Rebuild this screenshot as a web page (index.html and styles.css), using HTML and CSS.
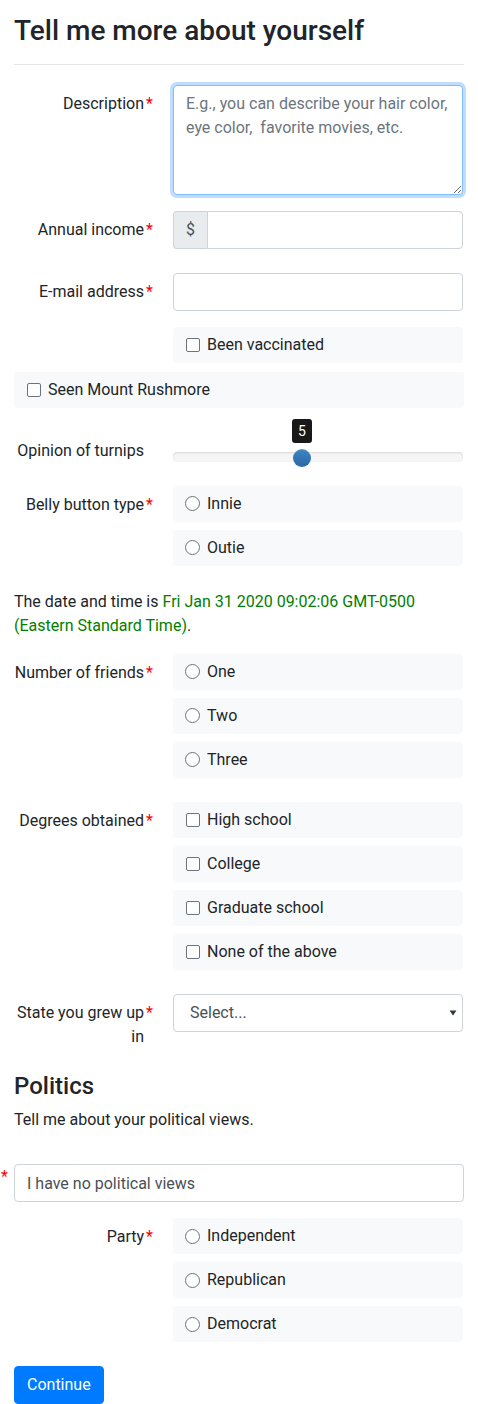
FILE: index.html
```html
<!DOCTYPE html>
<html lang="en">
<head>
<meta charset="utf-8">
<title>Tell me more about yourself</title>
<link rel="stylesheet" href="styles.css">
</head>
<body>
<main class="page">
  <h3 class="title">Tell me more about yourself</h3>
  <hr class="rule">

  <div class="group">
    <label class="lbl"><span class="lbl-text">Description</span><span class="req">*</span></label>
    <div class="ctrl">
      <textarea class="field area" placeholder="E.g., you can describe your hair color, eye color,  favorite movies, etc."></textarea>
    </div>
  </div>

  <div class="group group-wide">
    <label class="lbl"><span class="lbl-text">Annual income</span><span class="req">*</span></label>
    <div class="ctrl">
      <div class="igroup">
        <span class="addon">$</span>
        <input class="field ifield" type="text">
      </div>
    </div>
  </div>

  <div class="group">
    <label class="lbl"><span class="lbl-text">E-mail address</span><span class="req">*</span></label>
    <div class="ctrl">
      <input class="field" type="email">
    </div>
  </div>

  <div class="group group-tight">
    <div class="lbl-empty"></div>
    <div class="ctrl">
      <label class="opt"><input class="chk" type="checkbox"><span>Been vaccinated</span></label>
    </div>
  </div>

  <div class="block">
    <label class="opt"><input class="chk" type="checkbox"><span>Seen Mount Rushmore</span></label>
  </div>

  <div class="group">
    <label class="lbl"><span class="lbl-text">Opinion of turnips</span><span class="req"></span></label>
    <div class="ctrl">
      <div class="slider">
        <div class="track"></div>
        <div class="handle-wrap" style="left: 44.44%;">
          <div class="tip">5</div>
          <div class="thumb"></div>
        </div>
      </div>
    </div>
  </div>

  <div class="group">
    <label class="lbl"><span class="lbl-text">Belly button type</span><span class="req">*</span></label>
    <div class="ctrl">
      <label class="opt"><input class="rad" type="radio" name="belly"><span>Innie</span></label>
      <label class="opt"><input class="rad" type="radio" name="belly"><span>Outie</span></label>
    </div>
  </div>

  <p class="date">The date and time is <span class="green">Fri Jan 31 2020 09:02:06 GMT-0500 (Eastern Standard Time)</span>.</p>

  <div class="group">
    <label class="lbl"><span class="lbl-text">Number of friends</span><span class="req">*</span></label>
    <div class="ctrl">
      <label class="opt"><input class="rad" type="radio" name="friends"><span>One</span></label>
      <label class="opt"><input class="rad" type="radio" name="friends"><span>Two</span></label>
      <label class="opt"><input class="rad" type="radio" name="friends"><span>Three</span></label>
    </div>
  </div>

  <div class="group">
    <label class="lbl"><span class="lbl-text">Degrees obtained</span><span class="req">*</span></label>
    <div class="ctrl">
      <label class="opt"><input class="chk" type="checkbox"><span>High school</span></label>
      <label class="opt"><input class="chk" type="checkbox"><span>College</span></label>
      <label class="opt"><input class="chk" type="checkbox"><span>Graduate school</span></label>
      <label class="opt"><input class="chk" type="checkbox"><span>None of the above</span></label>
    </div>
  </div>

  <div class="group">
    <label class="lbl"><span class="lbl-text">State you grew up in</span><span class="req">*</span></label>
    <div class="ctrl">
      <div class="sel-wrap">
        <select class="field sel">
          <option>Select...</option>
        </select>
        <svg class="caret" width="8" height="6" viewBox="0 0 8 6" aria-hidden="true"><path d="M0.5 0.5 H7.5 L4 5.5 Z" fill="#343a40"/></svg>
      </div>
    </div>
  </div>

  <h4 class="subtitle">Politics</h4>
  <p class="intro">Tell me about your political views.</p>

  <div class="solo">
    <span class="solo-req">*</span>
    <input class="field" type="text" value="I have no political views">
  </div>

  <div class="group">
    <label class="lbl"><span class="lbl-text">Party</span><span class="req">*</span></label>
    <div class="ctrl">
      <label class="opt"><input class="rad" type="radio" name="party"><span>Independent</span></label>
      <label class="opt"><input class="rad" type="radio" name="party"><span>Republican</span></label>
      <label class="opt"><input class="rad" type="radio" name="party"><span>Democrat</span></label>
    </div>
  </div>

  <button class="btn" type="button">Continue</button>
</main>
</body>
</html>
```

FILE: styles.css
```css
* {
  box-sizing: border-box;
}

html, body {
  margin: 0;
  padding: 0;
  background: #fff;
}

body {
  font-family: Roboto, "Liberation Sans", sans-serif;
  font-size: 16px;
  line-height: 1.5;
  color: #212529;
}

.page {
  padding: 14px 14px 0 14px;
  width: 478px;
}

.title {
  margin: 0 0 16px 0;
  font-size: 28px;
  font-weight: 500;
  line-height: 1.2;
}

.rule {
  margin: 0 0 20px 0;
  border: 0;
  border-top: 1px solid rgba(0, 0, 0, 0.1);
  height: 0;
}

.group {
  display: grid;
  grid-template-columns: 145px 290px;
  column-gap: 14px;
  margin-bottom: 16px;
}

.group-wide {
  margin-bottom: 24px;
}

.group-tight {
  margin-bottom: 1px;
}

.lbl {
  display: flex;
  padding: 7px 0;
  line-height: 24px;
}

.lbl-text {
  flex: 1;
  text-align: right;
}

.req {
  width: 15px;
  flex: none;
  padding-left: 2px;
  color: #ff0000;
}

.ctrl {
  display: flex;
  flex-direction: column;
}

.field {
  display: block;
  width: 100%;
  height: 38px;
  padding: 6px 12px;
  font-family: inherit;
  font-size: 16px;
  line-height: 24px;
  color: #495057;
  background: #fff;
  border: 1px solid #ced4da;
  border-radius: 4px;
  outline: none;
}

.area {
  height: 110px;
  resize: vertical;
  border-color: #80bdff;
  box-shadow: 0 0 0 3px rgba(0, 123, 255, 0.25);
}

.area::placeholder {
  color: #6c757d;
  opacity: 1;
}

.igroup {
  display: flex;
}

.addon {
  width: 34px;
  flex: none;
  display: flex;
  align-items: center;
  justify-content: center;
  background: #e9ecef;
  border: 1px solid #ced4da;
  border-right: 0;
  border-radius: 4px 0 0 4px;
  color: #495057;
}

.ifield {
  flex: 1;
  border-radius: 0 4px 4px 0;
}

.opt {
  display: flex;
  align-items: center;
  height: 36px;
  padding-left: 13px;
  margin-bottom: 8px;
  background: #f8f9fa;
  border-radius: 4px;
  line-height: 24px;
}

.block {
  display: flex;
  flex-direction: column;
  margin-bottom: 16px;
}

.chk,
.rad {
  -webkit-appearance: none;
  appearance: none;
  flex: none;
  margin: 0 7px 0 0;
  background: #fff;
  border: 1.5px solid #6c757d;
}

.chk {
  width: 14px;
  height: 14px;
  border-radius: 2px;
}

.rad {
  width: 15px;
  height: 15px;
  margin-left: -1px;
  margin-right: 7px;
  border-radius: 50%;
}

.slider {
  position: relative;
  height: 38px;
}

.track {
  position: absolute;
  left: 0;
  right: 0;
  top: 20px;
  height: 10px;
  background: #f5f5f5;
  border-radius: 4px;
  box-shadow: inset 0 1px 2px rgba(0, 0, 0, 0.12);
}

.handle-wrap {
  position: absolute;
  top: -13px;
  width: 0;
  height: 0;
}

.tip {
  position: absolute;
  left: -10px;
  top: 0;
  width: 20px;
  height: 24px;
  line-height: 24px;
  text-align: center;
  font-size: 14px;
  color: #fff;
  background: rgba(0, 0, 0, 0.9);
  border-radius: 3px;
}

.thumb {
  position: absolute;
  left: -9px;
  top: 30px;
  width: 18px;
  height: 18px;
  border-radius: 50%;
  background: linear-gradient(to bottom, #3d84c4, #2b69a3);
  box-shadow: inset 0 1px 0 rgba(255, 255, 255, 0.15), 0 1px 2px rgba(0, 0, 0, 0.05);
}

.date {
  margin: 0 0 16px 0;
}

.green {
  color: #008000;
}

.sel-wrap {
  position: relative;
}

.sel {
  -webkit-appearance: none;
  appearance: none;
  padding-left: 16px;
  padding-right: 28px;
}

.caret {
  position: absolute;
  right: 6px;
  top: 16px;
}

.subtitle {
  margin: 0 0 8px 0;
  font-size: 24px;
  font-weight: 500;
  line-height: 1.2;
}

.intro {
  margin: 0 0 32px 0;
}

.solo {
  display: flex;
  margin-left: -14px;
  margin-bottom: 16px;
}

.solo-req {
  width: 14px;
  flex: none;
  padding-left: 1px;
  padding-top: 1px;
  color: #ff0000;
  line-height: 24px;
}

.btn {
  display: inline-block;
  padding: 6px 12px;
  font-family: inherit;
  font-size: 16px;
  line-height: 24px;
  color: #fff;
  background: #007bff;
  border: 1px solid #007bff;
  border-radius: 4px;
}
```
